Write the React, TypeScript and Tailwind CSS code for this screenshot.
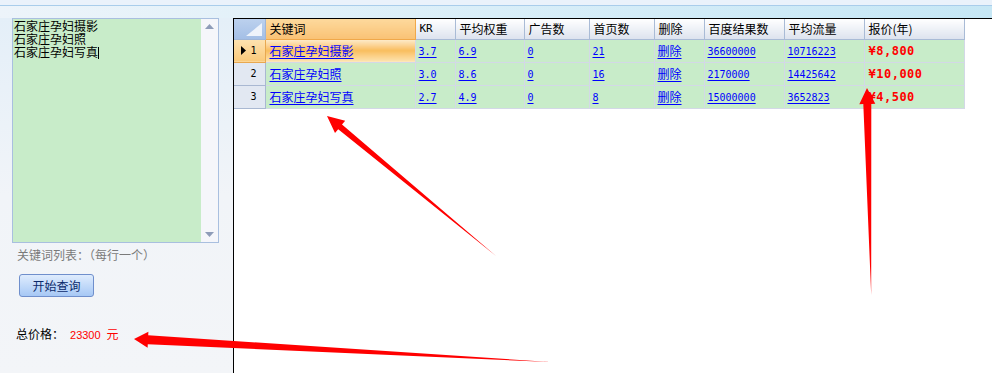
import React from 'react';

type Row = { no: number; kw: string; kr: string; qz: string; ad: string; home: string; total: string; flow: string; price: string };

const rows: Row[] = [
    { no: 1, kw: '石家庄孕妇摄影', kr: '3.7', qz: '6.9', ad: '0', home: '21', total: '36600000', flow: '10716223', price: '¥8,800' },
    { no: 2, kw: '石家庄孕妇照', kr: '3.0', qz: '8.6', ad: '0', home: '16', total: '2170000', flow: '14425642', price: '¥10,000' },
    { no: 3, kw: '石家庄孕妇写真', kr: '2.7', qz: '4.9', ad: '0', home: '8', total: '15000000', flow: '3652823', price: '¥4,500' },
];

const cols = [
    { title: '关键词', w: 'w-[150px]' },
    { title: 'KR', w: 'w-[40px]' },
    { title: '平均权重', w: 'w-[69px]' },
    { title: '广告数', w: 'w-[65px]' },
    { title: '首页数', w: 'w-[65px]' },
    { title: '删除', w: 'w-[50px]' },
    { title: '百度结果数', w: 'w-[80px]' },
    { title: '平均流量', w: 'w-[80px]' },
    { title: '报价(年)', w: 'w-[100px]' },
];

const cjk = "font-['Noto_Sans_CJK_SC',sans-serif]";
const mono = "font-['DejaVu_Sans_Mono',monospace]";
const cell = 'h-[23px] p-0 pl-[3px] border-r border-b border-[#d3d8e7] bg-[#c8ecc9] align-middle';

const NumLink: React.FC<{ v: string }> = ({ v }) => (
    <span className={`${mono} text-[10px] text-[#0000ff] underline underline-offset-2`}>{v}</span>
);

const Arrows: React.FC = () => (
    <svg className="absolute inset-0 pointer-events-none" width="992" height="373" viewBox="0 0 992 373">
        <polygon fill="#ff0000" points="327,116 345.2,120.7 342,124.6 496,256 338.2,129.2 335,133.1" />
        <polygon fill="#ff0000" points="867,88 875.3,103.8 871.3,104 871.2,295 863.3,104.1 859.3,104.2" />
        <polygon fill="#ff0000" points="134,339 148.4,331.8 148.2,335.3 550,362 147.8,344.3 147.6,347.8" />
    </svg>
);

const App: React.FC = () => {
    return (
        <div className={`relative w-[992px] h-[373px] overflow-hidden bg-[#f3f5f8] ${cjk}`}>
            {/* top strip */}
            <div className="h-[5px] bg-[#eaf2fb]" />
            <div className="h-[13px] border-t border-[#a9cdeb] bg-gradient-to-r from-[#edf4fa] via-[#d9eef8] to-[#c6e7f5]" />

            <div className="flex h-[355px]">
                {/* left panel */}
                <div className="w-[233px] flex flex-col bg-gradient-to-b from-[#e4eff8] via-[#f1f4f8] to-[#f3f5f8]">
                    <div className="ml-[12px] w-[207px] h-[225px] flex border border-[#a9bfdf] bg-[#c8ecc9]">
                        <div className="flex-1 pl-[1px] text-[12px] leading-[13px] text-black">
                            <div>石家庄孕妇摄影</div>
                            <div>石家庄孕妇照</div>
                            <div>石家庄孕妇写真<span className="inline-block w-px h-[12px] bg-black align-[-2px]" /></div>
                        </div>
                        <div className="w-[17px] bg-[#f5f6fa] flex flex-col justify-between items-center py-[5px]">
                            <svg width="9" height="5" viewBox="0 0 9 5"><polygon points="4.5,0 9,5 0,5" fill="#8e9cb8" /></svg>
                            <svg width="9" height="5" viewBox="0 0 9 5"><polygon points="0,0 9,0 4.5,5" fill="#8e9cb8" /></svg>
                        </div>
                    </div>
                    <div className="ml-[17px] mt-[4px] text-[12px] leading-[16px] text-[#7a7a7a]">关键词列表：（每行一个）</div>
                    <button className="ml-[19px] mt-[11px] w-[75px] h-[23px] rounded-[3px] border border-[#6f8fcc] bg-gradient-to-b from-[#dfecfd] to-[#a6c8f5] text-[12px] leading-[16px] text-[#0b2a6b]">开始查询</button>
                    <div className="ml-[16px] mt-[29px] flex items-baseline text-[12px] leading-[16px]">
                        <span className="text-black">总价格：</span>
                        <span className="ml-[6px] text-[#ff0000] font-['Liberation_Sans',sans-serif] text-[11px]">23300</span>
                        <span className="ml-[6px] text-[#ff0000]">元</span>
                    </div>
                </div>

                {/* grid */}
                <div className="flex-1 border-l border-t border-black bg-white">
                    <table className="table-fixed border-collapse text-[12px] leading-[14px]">
                        <thead>
                            <tr>
                                <th className="w-[31px] h-[20px] p-0 border-r border-b border-[#9fb5d6] bg-gradient-to-b from-[#bcd1ee] to-[#a4bfe6] relative">
                                    <svg className="absolute right-[3px] bottom-[3px]" width="16" height="13" viewBox="0 0 16 13">
                                        <polygon points="16,0 16,13 0,13" fill="#eef3fb" />
                                    </svg>
                                </th>
                                {cols.map((c, i) => (
                                    <th
                                        key={c.title}
                                        className={`${c.w} h-[20px] p-0 pl-[4px] text-left font-normal text-black border-b ${i === 0 ? 'border-r border-[#f0a84a] bg-gradient-to-b from-[#fdd99c] to-[#f9c275]' : 'border-r border-[#a9bbd6] bg-gradient-to-b from-white to-[#dde3ee]'} ${i === 1 ? mono + ' text-[11px]' : ''}`}
                                    >
                                        {c.title}
                                    </th>
                                ))}
                            </tr>
                        </thead>
                        <tbody>
                            {rows.map((r) => {
                                const sel = r.no === 1;
                                return (
                                    <tr key={r.no}>
                                        <td className={`h-[23px] p-0 border-r border-b ${sel ? 'border-[#e8a850] bg-gradient-to-b from-[#fde2b0] to-[#fac979]' : 'border-[#a9b8d2] bg-[#e2e8f2]'}`}>
                                            <div className="flex items-center justify-between pl-[7px] pr-[8px]">
                                                {sel ? (
                                                    <svg width="5" height="9" viewBox="0 0 5 9"><polygon points="0,0 5,4.5 0,9" fill="#000" /></svg>
                                                ) : <span />}
                                                <span className={`${mono} text-[10px] text-black`}>{r.no}</span>
                                            </div>
                                        </td>
                                        <td className={`h-[23px] p-0 pl-[4px] border-r border-b border-[#d3d8e7] ${sel ? 'bg-gradient-to-b from-[#fdeccc] via-[#f9bd5c] to-[#fde3ae]' : 'bg-[#c8ecc9]'}`}>
                                            <span className="text-[#0000ff] underline underline-offset-2">{r.kw}</span>
                                        </td>
                                        <td className={cell}><NumLink v={r.kr} /></td>
                                        <td className={cell}><NumLink v={r.qz} /></td>
                                        <td className={cell}><NumLink v={r.ad} /></td>
                                        <td className={cell}><NumLink v={r.home} /></td>
                                        <td className={cell}><span className="text-[#0000ff] underline underline-offset-2">删除</span></td>
                                        <td className={cell}><NumLink v={r.total} /></td>
                                        <td className={cell}><NumLink v={r.flow} /></td>
                                        <td className={`${cell} pl-[4px]`}>
                                            <span className={`${mono} text-[12px] font-bold tracking-[0.5px] text-[#ff0000]`}>{r.price}</span>
                                        </td>
                                    </tr>
                                );
                            })}
                        </tbody>
                    </table>
                </div>
            </div>

            <Arrows />
        </div>
    );
};

export default App;
